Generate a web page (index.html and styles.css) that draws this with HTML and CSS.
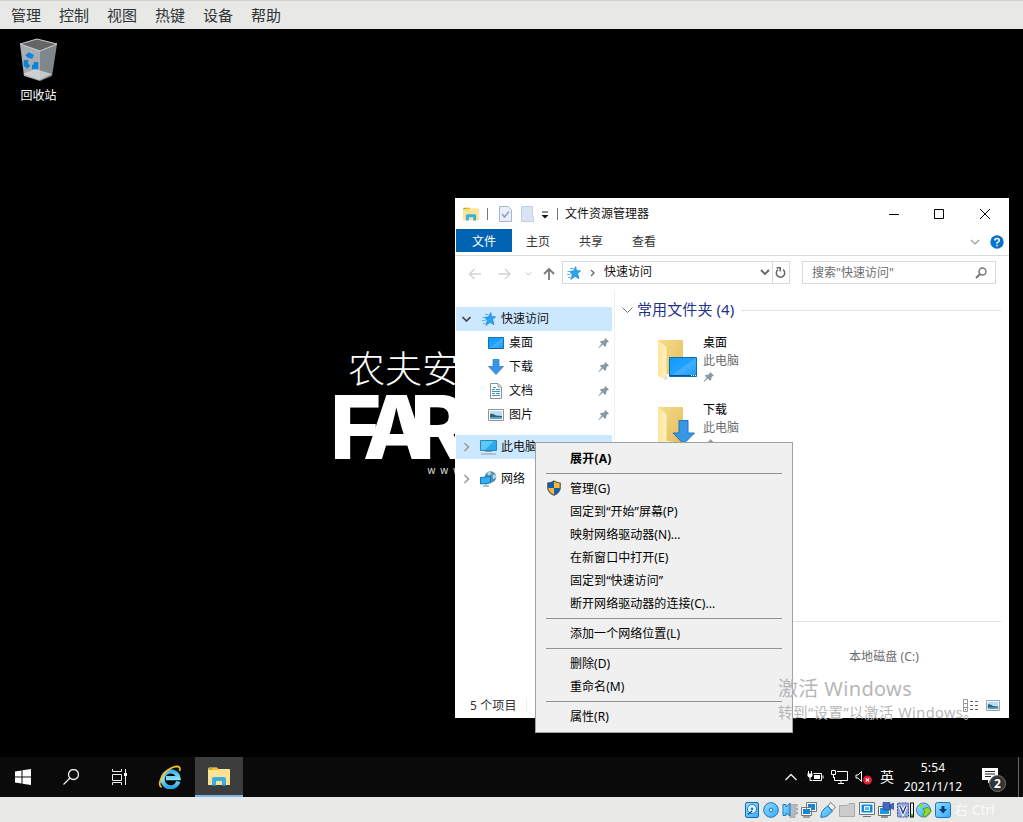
FILE: index.html
```html
<!DOCTYPE html>
<html lang="zh-CN">
<head>
<meta charset="utf-8">
<title>文件资源管理器</title>
<link rel="stylesheet" href="styles.css">
</head>
<body>
<svg class="defs" width="0" height="0">
  <defs>
    <linearGradient id="gBlue" x1="0" y1="0" x2="1" y2="1"><stop offset="0" stop-color="#0f98fb"/><stop offset=".5" stop-color="#22a2ff"/><stop offset=".52" stop-color="#43b0ff"/><stop offset="1" stop-color="#1c9af8"/></linearGradient>
    <linearGradient id="gFold" x1="0" y1="0" x2="1" y2="1"><stop offset="0" stop-color="#f6dc8c"/><stop offset="1" stop-color="#e3bd58"/></linearGradient>
    <linearGradient id="gFlap" x1="0" y1="0" x2="1" y2="0"><stop offset="0" stop-color="#ffe59c"/><stop offset="1" stop-color="#fff0be"/></linearGradient>
    <linearGradient id="gVb" x1="0" y1="0" x2="1" y2="1"><stop offset="0" stop-color="#8fe0ff"/><stop offset="1" stop-color="#3aa9fb"/></linearGradient>
    <linearGradient id="gIe" x1="0" y1="0" x2="0" y2="1"><stop offset="0" stop-color="#3fb4ea"/><stop offset=".5" stop-color="#8be4ff"/><stop offset="1" stop-color="#2ba3e2"/></linearGradient>
  </defs>
  <symbol id="pin" viewBox="0 0 12 12"><path d="M7.2 1 11 4.6 9.8 5 8.4 6.6 8.3 9 7 9.8 4.6 7.6 1.2 11 .6 10.6 3.6 6.6 1.8 4.8 2.8 4 5.2 3.8 6.9 2.2Z" fill="#8a98a4"/></symbol>
  <symbol id="star" viewBox="0 0 14 14"><path d="M8.8.5 9.5 4.600 13.700 4.800 10.700 7.600 12 12.800 8 10.400 3.800 13.500 5.200 8.600 2.600 5.400 6.500 4.800Z" fill="#29a3f2" stroke="#1682cf" stroke-width=".6"/><path d="M3 2.500H6.500M.5 5.500H3M0 8.500H3.500M1 11.500H3.500" stroke="#52b5f5"/></symbol>
  <symbol id="folder" viewBox="0 0 42 44"><path d="M1 1H26V37L9 35Z" fill="url(#gFold)"/><path d="M1 1 9.5 8V41L1 37Z" fill="url(#gFlap)"/><path d="M9 36 11 40 7 41Z" fill="#ddd"/></symbol>
  <symbol id="photo" viewBox="0 0 16 12"><path d="M.5.5H15.5V11.5H.5Z" fill="#fff" stroke="#8d959b"/><path d="M2 2H14V10H2Z" fill="#b9dcf8"/><path d="M2 5Q5 4 8 6.500L14 7V8.500H2Z" fill="#2f6470"/><path d="M2 8.500H14V10H2Z" fill="#5a9fd8"/></symbol>
  <symbol id="explorer" viewBox="0 0 22 19"><path d="M0 1.5 1 .5H9L10 2H21Q22 2 22 3V18H0Z" fill="#ffe294"/><path d="M0 1H10V3H0Z" fill="#f6bd27"/><path d="M1 2H4" stroke="#55ac65"/><path d="M4 18.500V12Q4 10 6 10H16Q18 10 18 12V18.500H14V14H8V18.500Z" fill="#35afe6"/></symbol>
</svg>

<div class="screen">
  <nav class="menubar"><span>管理</span><span>控制</span><span>视图</span><span>热键</span><span>设备</span><span>帮助</span></nav>

  <main class="desktop">
    <div class="bin">
      <svg width="40" height="44" viewBox="0 0 40 44"><path d="M1 6 21 12V43L5 38Z" fill="#a9adb1"/><path d="M21 12 38 6 33 38 21 43Z" fill="#7f878d"/><path d="M1 6 18 1 38 6 21 13Z" fill="#656565" stroke="#ccd0d3"/><path d="M4 36 16 31 33 36 21 42Z" fill="#d6d9dc" opacity=".8"/><g stroke="#0a83dc" stroke-width="4.500" fill="none"><path d="M8 19 10 17 14 19"/><path d="M7 22 7 27 10 29"/><path d="M13 29 17 29 17 24"/></g></svg>
      <span>回收站</span>
    </div>
    <svg class="wallpaper" width="200" height="140" viewBox="0 0 200 140">
      <text class="brand-cn" x="17" y="39">农夫安</text>
      <text class="brand-en" x="-1 32 79" y="115">FAR</text>
      <text class="brand-www" x="96.500" y="130">www</text>
    </svg>

    <section class="window">
      <header class="titlebar">
        <svg class="t-app" width="16" height="14"><use href="#explorer"/></svg>
        <i class="tick"></i>
        <svg class="t-check" width="13" height="16"><path d="M.5.5H9L12.5 4V15.5H.5Z" fill="#e9eff9" stroke="#a9b5ca"/><path d="m3 8 2.5 3L10 5.5" fill="none" stroke="#8ba0c4" stroke-width="1.5"/></svg>
        <svg class="t-new" width="13" height="16"><path d="M.5.5H11.5V10L12.5 11V15.5H.5Z" fill="#dbe4f3" stroke="#c1cee3"/></svg>
        <svg class="t-more" width="8" height="8"><path d="M1 1H7" stroke="#222"/><path d="M.5 4H7.5L4 7.5Z" fill="#111"/></svg>
        <i class="tick"></i>
        <span class="title">文件资源管理器</span>
        <svg class="controls" width="102" height="12" fill="none" stroke="#000"><path d="M0 6.500H10M45.500 1.500H54.500V10.500H45.500ZM91 1 101 11M101 1 91 11"/></svg>
      </header>
      <div class="tabs">
        <b class="active">文件</b><span>主页</span><span>共享</span><span>查看</span>
        <svg class="help" width="34" height="14"><path d="m1 5 4 4 4-4" fill="none" stroke="#999" stroke-width="1.2"/><circle cx="27" cy="7" r="6.700" fill="#0873cf"/><path d="M24.800 5.500Q24.800 3.500 27 3.500 29.300 3.500 29.300 5.400 29.300 6.500 27 7.700V8.700M27 9.700V11.200" fill="none" stroke="#fff" stroke-width="1.500"/></svg>
      </div>
      <div class="address">
        <svg class="arrows" width="88" height="14" fill="none"><path d="M6.500 2 1.500 7 6.500 12M1.500 7H13M37 2 42 7 37 12M42 7H30.500" stroke="#d4d4d4" stroke-width="1.500"/><path d="m58 5.500 2.500 2.500L63 5.500" stroke="#bbb"/><path d="M76 7 81 2 86 7M81 2V13" stroke="#777" stroke-width="1.800"/></svg>
        <div class="path">
          <svg class="p-star" width="14" height="14"><use href="#star"/></svg>
          <svg class="p-sep" width="5" height="8"><path d="M1 1 4 4 1 7" fill="none" stroke="#666" stroke-width="1.300"/></svg>
          <span>快速访问</span>
          <svg class="p-down" width="10" height="7"><path d="m1 1 4 4 4-4" fill="none" stroke="#666" stroke-width="1.800"/></svg>
          <div class="refresh"><svg width="11" height="12" fill="none" stroke="#666" stroke-width="1.500"><path d="M8 3.600A4.200 4.200 0 1 1 3 3.600M1.500 1.700H5.200V5.500"/></svg></div>
        </div>
        <div class="search"><span>搜索"快速访问"</span><svg width="12" height="12"><circle cx="7.500" cy="4.500" r="3.500" fill="none" stroke="#777" stroke-width="1.500"/><path d="M5 7 1 11" stroke="#777" stroke-width="2"/></svg></div>
      </div>
      <div class="body">
        <aside class="tree">
          <div class="node on"><svg class="exp" width="9" height="6"><path d="m.5 1 4 4 4-4" fill="none" stroke="#444" stroke-width="1.600"/></svg><svg class="n-star" width="14" height="14"><use href="#star"/></svg><span>快速访问</span></div>
          <div class="leaf"><svg width="16" height="14"><path d="M.5 1.500H15.500V12.500H.5Z" fill="url(#gBlue)" stroke="#0c72b8"/><path d="M1 12.500H15" stroke="#0a5e9c"/></svg><span>桌面</span><svg class="pin" width="12" height="12"><use href="#pin"/></svg></div>
          <div class="leaf"><svg width="16" height="16"><path d="M5 .5H11V7.500H15.500L8 15.500.5 7.500H5Z" fill="#3995e6" stroke="#2179c5" stroke-width=".7"/></svg><span>下载</span><svg class="pin" width="12" height="12"><use href="#pin"/></svg></div>
          <div class="leaf"><svg width="16" height="16"><path d="M2.500.5H10L13.500 4V15.500H2.500Z" fill="#fff" stroke="#909090"/><path d="M10 1V4H13" fill="none" stroke="#999"/><path d="M4 6.500H7M8 6.500H12M4 8.500H12M4 10.500H7M8 10.500H12M4 12.500H12M5 4.500H8" stroke="#3a91cf"/></svg><span>文档</span><svg class="pin" width="12" height="12"><use href="#pin"/></svg></div>
          <div class="leaf"><svg width="16" height="12"><use href="#photo"/></svg><span>图片</span><svg class="pin" width="12" height="12"><use href="#pin"/></svg></div>
          <div class="node on gap"><svg class="exp" width="9" height="10"><path d="m2.500 1 4 4-4 4" fill="none" stroke="#999" stroke-width="1.500"/></svg><svg class="n-pc" width="17" height="16"><path d="M.5 1.500H16.500V11.500H.5Z" fill="#5cc8f7" stroke="#2988b4"/><path d="M5 11 14 2H16V11Z" fill="#2caaf0"/><path d="M5 12.500H12M1 15H16" stroke="#849dab"/></svg><span>此电脑</span></div>
          <div class="node gap"><svg class="exp" width="9" height="10"><path d="m2.500 1 4 4-4 4" fill="none" stroke="#999" stroke-width="1.500"/></svg><svg class="n-pc" width="17" height="16"><circle cx="10.500" cy="6" r="5.800" fill="#4f8fb5"/><path d="M7 2 10 .5 11.500 3 8.500 4.500ZM12.500 4 15.500 3.500 16 7 13 8Z" fill="#bad8e4"/><path d="M.5 6.500 10.500 5.500V12L.5 13Z" fill="#34aef1" stroke="#1179b6"/><path d="M3 15H9M6 13V15" stroke="#4a98bf"/></svg><span>网络</span></div>
        </aside>
        <div class="content">
          <div class="group"><svg width="11" height="7"><path d="m.5.500 5 5 5-5" fill="none" stroke="#777"/></svg><span>常用文件夹 (4)</span><i></i></div>
          <article class="tile"><svg width="42" height="44"><use href="#folder"/><path d="M12.500 18.500H39.500V37.500H12.500Z" fill="url(#gBlue)" stroke="#0870b7"/><path d="M12 36.500H40" stroke="#075789"/><path d="M34 36.500H39" stroke="#fff" stroke-dasharray="1 1"/></svg><div><b>桌面</b><span>此电脑</span><svg width="12" height="12"><use href="#pin"/></svg></div></article>
          <article class="tile"><svg width="42" height="44"><use href="#folder"/><path d="M22 14.500H31V27H37.500L26.500 38 16 27H22Z" fill="#3995e6" stroke="#1c76c2"/></svg><div><b>下载</b><span>此电脑</span><svg width="12" height="12"><use href="#pin"/></svg></div></article>
          <div class="recent"><span>本地磁盘 (C:)</span></div>
        </div>
      </div>
      <footer class="status"><span>5 个项目</span><i></i><svg class="s-list" width="16" height="13" fill="none"><path d="M.5.500H4.500V12.500H.5ZM1 4.500H4M1 8.500H4" stroke="#999"/><path d="M7 2.500H10M12 2.500H15M7 6.500H10M12 6.500H15M7 10.500H10M12 10.500H15" stroke="#666"/><path d="M2 10.500H3" stroke="#d22"/></svg><svg width="14" height="11" viewBox="0 0 16 12" preserveAspectRatio="none"><use href="#photo"/></svg></footer>
    </section>

    <div class="context">
      <div class="item"><b>展开(A)</b></div><hr>
      <div class="item"><svg width="14" height="16"><path d="M7 1Q10 3 13.200 3V8Q13 12.500 7 15.200 1 12.500.8 8V3Q4 3 7 1Z" fill="#ffb82e"/><path d="M7 1V8H.8V3Q4 3 7 1ZM7 8H13.200Q13 12.500 7 15.200Z" fill="#0c60b8"/><path d="M7 1Q10 3 13.200 3V8Q13 12.500 7 15.200 1 12.500.8 8V3Q4 3 7 1Z" fill="none" stroke="#4b5560" stroke-width="1.200"/></svg>管理(G)</div>
      <div class="item">固定到“开始”屏幕(P)</div>
      <div class="item">映射网络驱动器(N)...</div>
      <div class="item">在新窗口中打开(E)</div>
      <div class="item">固定到“快速访问”</div>
      <div class="item">断开网络驱动器的连接(C)...</div><hr>
      <div class="item">添加一个网络位置(L)</div><hr>
      <div class="item">删除(D)</div>
      <div class="item">重命名(M)</div><hr>
      <div class="item">属性(R)</div>
    </div>
    <div class="watermark"><p>激活 Windows</p><small>转到“设置”以激活 Windows。</small></div>
  </main>

  <div class="taskbar">
    <div class="task"><svg width="16" height="16" fill="#fff"><path d="M0 2.500 6.500 1.500V7.500H0ZM7.500 1.300 16 0V7.500H7.500ZM0 8.500H6.500V14.500L0 13.500ZM7.500 8.500H16V16L7.500 14.700Z"/></svg></div>
    <div class="task"><svg width="16" height="16" fill="none" stroke="#eee" stroke-width="1.300"><circle cx="10.500" cy="5.500" r="5"/><path d="M7 9 .5 15.500"/></svg></div>
    <div class="task"><svg width="17" height="16" fill="none" stroke="#eee"><path d="M1.500 0V2.500H10.500V0M1.500 5.500H10.500V11.500H1.500ZM1.500 16V13.500H10.500V16M14.500 0V16"/><path d="M13 4H16V7H13Z" fill="#fff" stroke="none"/></svg></div>
    <div class="task ie"><svg width="24" height="24" viewBox="0 0 24 24" fill="none"><path d="M20.300 16.500A8 8 0 1 1 20.500 13.200H8" stroke="url(#gIe)" stroke-width="4.200"/><path d="M3.500 22.200Q-.5 20 4 12 9 3.800 17 1.700 23.500.5 21.500 6" stroke="#f5bd1f" stroke-width="1.800"/></svg></div>
    <div class="task current"><svg width="22" height="19"><use href="#explorer"/></svg></div>
    <div class="tray">
      <svg width="12" height="8"><path d="m.5 7 5.500-5.500L11.500 7" fill="none" stroke="#eee" stroke-width="1.400"/></svg>
      <svg width="17" height="12" fill="none" stroke="#fff"><path d="M1.500 0V3M4.500 0V3M3 6V9.500H5M6.500 2.500H14.500V9.500H5.500M16 4.500V7.500"/><path d="M.5 2.500H5.500V5L4 6.500H2L.5 5ZM7 4H13V8H7Z" fill="#fff" stroke="none"/></svg>
      <svg width="17" height="14" fill="none" stroke="#fff"><path d="M6 1.500H16.500V10.500H3.500V7M7 13.500H13M10 11V13M.5.500H4.500V4.500H.5ZM2.500 5V8"/></svg>
      <svg width="18" height="15" fill="none"><path d="M1 5H3L6.500 1.500V11.500L3 8H1Z" stroke="#fff"/><circle cx="12.500" cy="10" r="4.500" fill="#df1f2d"/><path d="m10.800 8.300 3.400 3.400M14.200 8.300l-3.400 3.400" stroke="#fff" stroke-width="1.200"/></svg>
      <span class="ime">英</span>
      <div class="clock"><span>5:54</span><span>2021/1/12</span></div>
      <div class="notice"><svg width="16" height="16"><path d="M0 0H16V12H9L6 15.500V12H0Z" fill="#fff"/><path d="M3 3.500H13M3 6H13M3 8.500H9" stroke="#222"/></svg><em>2</em></div>
      <i class="peek"></i>
    </div>
  </div>

  <div class="vmbar">
    <svg width="16" height="16"><rect x="1.500" y=".5" width="13" height="15" rx="1.500" fill="url(#gVb)" stroke="#176bac"/><circle cx="8" cy="7" r="4.500" fill="#e9f8ff" stroke="#237cb6"/><circle cx="8" cy="7" r="1.400" fill="#1b7fcc"/><path d="M4 12.500 8 9" stroke="#175785" stroke-width="1.500"/></svg>
    <svg width="16" height="16"><circle cx="8" cy="8" r="7.300" fill="url(#gVb)" stroke="#1974c4"/><circle cx="8" cy="8" r="1.800" fill="#fff" stroke="#1473c4"/></svg>
    <svg width="16" height="16"><path d="M8 2.500H15.500V4H13V6H15.500V8H13V10H15.500V12H13V15.500H8Z" fill="#b4bbc0" stroke="#969da2" stroke-width=".7"/><path d="M1 2.500H4V5L8 1V14L4 11V13.500H1Z" fill="url(#gVb)" stroke="#217cbc"/></svg>
    <svg width="16" height="16"><path d="M5.500.500H15.500V9.500H5.500ZM.5 5.500H10.500V13.500H.5Z" fill="#fff" stroke="#777"/><path d="M7 2H14V8H11V5H7ZM2 7H9V12H2Z" fill="#0d86e1"/><path d="M2 15H9" stroke="#888" stroke-width="1.500"/></svg>
    <svg width="16" height="16"><path d="M10.500.5 15.500 5 12.500 8.500 8 4Z" fill="#f2f2f2" stroke="#777"/><path d="M7.500 4 12.500 9 8 13.500Q5 15.500.8 15.300.8 10 4 7Z" fill="url(#gVb)" stroke="#1679b9"/></svg>
    <svg width="16" height="16"><path d="M.5 3.500H8L10 1.500H15.500V14.500H.5Z" fill="#cbcbcb" stroke="#aaa"/></svg>
    <svg width="16" height="16"><path d="M.5.500H15.500V12.500H.5ZM4 14.500H12" fill="#fff" stroke="#65737d"/><path d="M2.500 2.500H13.500V10.500H2.500Z" fill="#1089e1"/><path d="M5.500 4.500H10.500V8.500H5.500Z" fill="#55b5fb" stroke="#fff"/></svg>
    <svg width="16" height="16"><path d="M.5 4.500H12.500V13.500H.5Z" fill="#fff" stroke="#666"/><path d="M2 6H11V12H2Z" fill="#159ae7"/><path d="M5 .5H12V8H5ZM12 3 15.500 1V7.500L12 5.500Z" fill="#4268bf" stroke="#2c4690" stroke-width=".7"/><path d="M3 15H10" stroke="#777" stroke-width="1.500"/></svg>
    <svg class="cpu" width="17" height="16"><rect x=".5" y="1" width="11" height="14" rx="1" fill="#8ea5e7" stroke="#334580" stroke-dasharray="2 1"/><path d="m3 4 3 7 3-7" fill="none" stroke="#fff" stroke-width="3.400"/><path d="m3 4 3 7 3-7" fill="none" stroke="#253b80" stroke-width="1.400"/><path d="M13 .5H17V15.500H13Z" fill="#111"/><path d="M14 1.500H16V12.500H14Z" fill="#eee"/><path d="M14 12.500H16V14.500H14Z" fill="#1bd51b"/></svg>
    <svg width="16" height="16"><circle cx="7.500" cy="8" r="7" fill="url(#gVb)" stroke="#4981a8"/><path d="M3 3 6 1.500 7 4 4 7Z" fill="#8dda36"/><path d="M7 6.500 12 5.500 15.500 9 9.500 15.300 6.500 12 9 10Z" fill="#8dda36" stroke="#458920" stroke-width=".8"/></svg>
    <svg width="16" height="16"><rect x=".5" y=".5" width="15" height="15" rx="2" fill="url(#gVb)" stroke="#1975bd"/><path d="M6.500 4H9.500V7H12L8 11.500 4 7H6.500Z" fill="#083c79"/></svg>
    <span>右 Ctrl</span>
  </div>
</div>
</body>
</html>
```
FILE: styles.css
```css
* { box-sizing: border-box; }
body { margin: 0; font: 12px/16px "Noto Sans", "Noto Sans CJK SC", sans-serif; color: #111; }
svg { display: block; flex: none; }
.defs { position: absolute; }
.screen { width: 1023px; height: 822px; display: flex; flex-direction: column; overflow: hidden; background: #000; }
.menubar { height: 29px; padding: 0 11px 1px; display: flex; gap: 18px; align-items: center; font-size: 15px; color: #2e3436; background: #e8e8e7; border-top: 1px solid #d5cfcc; }
.desktop { position: relative; height: 728px; background: #000; }
.bin { width: 76px; padding: 9px 0 0 1px; display: flex; flex-direction: column; align-items: center; gap: 6px; color: #fff; }
.wallpaper { position: absolute; left: 331px; top: 315px; }
.brand-cn { font-family: "Noto Sans CJK SC", sans-serif; font-size: 37px; font-weight: 300; fill: #fff; }
.brand-en { font-family: Inter, sans-serif; font-size: 88px; font-weight: 800; fill: #fff; }
.brand-www { font-size: 10px; letter-spacing: 5px; fill: #ddd; }

.window { position: absolute; left: 455px; top: 169px; width: 554px; height: 520px; background: #fff; display: flex; flex-direction: column; overflow: hidden; }
.titlebar { height: 31px; padding-left: 9px; display: flex; align-items: center; }
.t-app { margin-left: -1px; }
.tick { width: 1px; height: 12px; background: #777; margin-left: 7px; }
.t-app + .tick { margin-left: 8px; }
.t-check { margin-left: 11px; }
.t-new { margin-left: 9px; }
.t-more { margin: 2px 1px 0 7px; }
.title { margin-left: 7px; }
.controls { margin-left: auto; margin-right: 18px; }
.tabs { height: 27px; padding-left: 1px; display: flex; align-items: center; border-bottom: 1px solid #dadbdc; padding-bottom: 3px; color: #333; }
.active { width: 56px; height: 23px; line-height: 25px; text-align: center; font-weight: 400; color: #fff; background: #0063b1; margin-right: 14px; }
.tabs span { margin-right: 29px; padding-top: 2px; }
.help { margin: 2px 5px 0 auto; }
.address { height: 34px; padding: 5px 13px 6px 13px; display: flex; align-items: center; }
.arrows { margin: 2px 6px 0 0; }
.path { width: 228px; height: 23px; display: flex; align-items: center; border: 1px solid #d9d9d9; padding-left: 4px; }
.p-sep { margin: 0 9px 0 9px; }
.path span { padding-bottom: 1px; }
.p-down { margin-left: auto; margin-right: 2px; }
.refresh { width: 17px; height: 21px; padding: 4px 2px; border-left: 1px solid #d9d9d9; }
.search { width: 194px; height: 23px; margin-left: 12px; padding: 0 8px 0 9px; display: flex; align-items: center; justify-content: space-between; border: 1px solid #d9d9d9; color: #6d6d6d; }
.body { display: flex; height: 402px; }
.tree { width: 160px; padding: 17px 2px 0 1px; border-right: 1px solid #f0f0f0; }
.node, .leaf { height: 24px; display: flex; align-items: center; }
.node { padding-left: 6px; }
.node span { margin-left: 5px; white-space: nowrap; }
.on { background: #cce8ff; }
.gap { margin-top: 8px; }
.n-star { margin-left: 11px; }
.n-pc { margin-left: 9px; }
.n-pc + span { margin-left: 4px; }
.leaf { padding: 0 2px 0 32px; }
.leaf span { margin-left: 5px; }
.pin { margin-left: auto; }
.content { width: 394px; padding: 8px 8px 0 7px; display: flex; flex-direction: column; }
.group { height: 24px; display: flex; align-items: center; font-size: 15px; color: #1e3287; }
.group span { margin: 0 7px 0 4px; padding-bottom: 2px; letter-spacing: .1px; }
.group i { height: 1px; flex: 1; background: #e2e2e2; }
.tile { height: 67px; padding: 14px 0 0 35px; display: flex; gap: 4px; }
.tile > svg { margin-top: 3px; }
.tile div { display: flex; flex-direction: column; color: #6d6d6d; line-height: 18px; margin-top: -2px; }
.tile b { font-weight: 400; color: #000; }
.tile div svg { margin-top: 1px; }
.recent { margin-top: 165px; border-top: 1px solid #e2e2e2; padding: 27px 0 0 227px; color: #6d6d6d; letter-spacing: .1px; }
.status { height: 26px; padding: 1px 9px 0 15px; display: flex; align-items: center; color: #333; }
.status span { padding-top: 1px; letter-spacing: .1px; }
.status i { width: 1px; height: 13px; background: #eee; margin-left: 10px; }
.s-list { margin-left: auto; margin-right: 7px; }

.context { position: absolute; left: 535px; top: 413px; width: 258px; height: 291px; padding: 4px 10px; background: #f0f0f0; border: 1px solid #a0a0a0; color: #000; }
.item { position: relative; height: 23px; padding-left: 24px; line-height: 23px; white-space: nowrap; letter-spacing: .05px; }
.item svg { position: absolute; left: 1px; top: 3px; }
.item b { letter-spacing: .25px; }
.context hr { height: 1px; margin: 3px 0; border: 0; background: #919191; }
.watermark { position: absolute; left: 778px; top: 648px; color: #b7b7b7; white-space: nowrap; }
.watermark p { margin: 0; font-size: 20px; line-height: 24px; letter-spacing: .35px; }
.watermark small { display: block; font-size: 14.500px; line-height: 22px; letter-spacing: .45px; }

.taskbar { height: 40px; display: flex; background: #0a0a0a; }
.task { width: 48px; display: flex; align-items: center; justify-content: center; }
.task:first-child { width: 47px; padding-right: 2px; }
.ie { width: 52px; padding-left: 2px; }
.current { background: #3d3d3d; border-bottom: 2px solid #76b9ed; }
.tray { margin-left: auto; display: flex; align-items: center; color: #fff; }
.tray > svg { margin-right: 7px; }
.tray > svg:first-child { margin-right: 10px; }
.ime { font-size: 14px; }
.clock { width: 78px; display: flex; flex-direction: column; align-items: center; line-height: 19px; letter-spacing: .15px; }
.notice { position: relative; width: 30px; height: 22px; padding-left: 10px; padding-top: 2px; }
.notice em { position: absolute; left: 17px; top: 9px; width: 17px; height: 17px; border: 1px solid #777; border-radius: 50%; background: #333; text-align: center; font: 700 12px/15px "Noto Sans", sans-serif; }
.peek { width: 1px; height: 40px; background: #666; margin: 0 4px 0 16px; }
.vmbar { height: 25px; background: #e8e8e7; padding-left: 744px; display: flex; align-items: center; gap: 3.100px; font-size: 14px; color: #fafafa; white-space: nowrap; }
.cpu { margin-right: -1px; }
```
